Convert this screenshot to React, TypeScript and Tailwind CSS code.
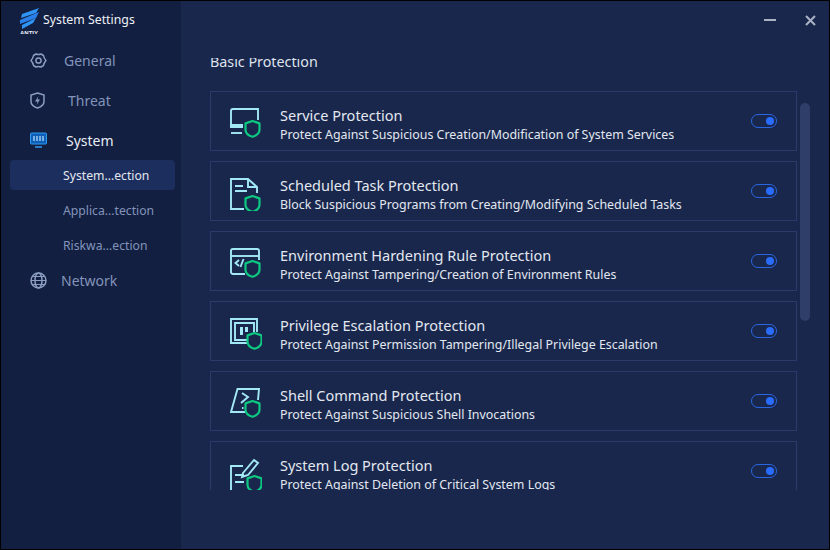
import React from "react";

const font = "font-['Noto_Sans','Open_Sans',sans-serif]";

function Shield({ x = 0, y = 0 }: { x?: number; y?: number }) {
  return (
    <g transform={`translate(${x} ${y})`}>
      <path
        d="M7.500 1 14.500 3.400V9.800c0 3.500-3 5.800-7 7-4-1.200-7-3.500-7-7V3.400Z"
        fill="#19274d"
        stroke="#0cc880"
        strokeWidth="2.200"
        strokeLinejoin="round"
      />
    </g>
  );
}

const line = { fill: "none", stroke: "#a3e8f5", strokeWidth: 1.9 };

const icons: Record<string, React.ReactNode> = {
  service: (
    <>
      <path d="M1 25V10a2 2 0 0 1 2-2h25v11" {...line} />
      <rect x="0" y="23" width="13" height="4" fill="#a3e8f5" />
      <path d="M1 32h11" {...line} />
      <Shield x={15} y={19} />
    </>
  ),
  task: (
    <>
      <path d="M14 38H1V8h17l9 8v6" {...line} />
      <path d="M18 8v8h9" {...line} />
      <path d="M5 15h8M5 20h12" {...line} />
      <Shield x={15} y={24} />
    </>
  ),
  env: (
    <>
      <path d="M15 33H3a2 2 0 0 1-2-2V10a2 2 0 0 1 2-2h24a2 2 0 0 1 2 2v9" {...line} />
      <path d="M1 15h28" {...line} />
      <path d="M9 19l-3.500 3 3.500 3M13.500 18l-3 8" {...line} />
      <Shield x={15} y={19} />
    </>
  ),
  privilege: (
    <>
      <path d="M17 32H1V8h26v13" {...line} />
      <path d="M17 29H5V12h19v9" {...line} />
      <rect x="10" y="16" width="3" height="8" fill="#a3e8f5" />
      <rect x="15" y="16" width="3" height="5" fill="#a3e8f5" />
      <Shield x={17} y={21} />
    </>
  ),
  shell: (
    <>
      <path d="M15 31H1L7.500 8H29l-1 11" {...line} />
      <path d="M12 12l6 4-7 6" {...line} />
      <path d="M12 27h1.500" {...line} />
      <Shield x={15} y={19} />
    </>
  ),
  log: (
    <>
      <path d="M13 15H1v25h14" {...line} />
      <path d="M5 24h9M5 31h9" {...line} />
      <path d="M13 22 24 9l4 3-10 12-6 2Z" {...line} />
      <Shield x={17} y={24} />
    </>
  ),
};

const cards = [
  { icon: "service", title: "Service Protection", desc: "Protect Against Suspicious Creation/Modification of System Services" },
  { icon: "task", title: "Scheduled Task Protection", desc: "Block Suspicious Programs from Creating/Modifying Scheduled Tasks" },
  { icon: "env", title: "Environment Hardening Rule Protection", desc: "Protect Against Tampering/Creation of Environment Rules" },
  { icon: "privilege", title: "Privilege Escalation Protection", desc: "Protect Against Permission Tampering/Illegal Privilege Escalation" },
  { icon: "shell", title: "Shell Command Protection", desc: "Protect Against Suspicious Shell Invocations" },
  { icon: "log", title: "System Log Protection", desc: "Protect Against Deletion of Critical System Logs" },
];

function Card({ icon, title, desc }: { icon: string; title: string; desc: string }) {
  return (
    <div className="flex h-[60px] items-center border border-[#2a3a6b] pl-[19px] pr-[19px]">
      <svg width="32" height="40" viewBox="0 0 32 40" className="shrink-0">
        {icons[icon]}
      </svg>
      <div className="ml-[18px] flex-1 pt-[7px]">
        <div className="text-[14.500px] leading-[19px] text-[#e3e7f0]">{title}</div>
        <div className="mt-[1px] text-[12.400px] leading-[18px] text-[#e3e7f0]">{desc}</div>
      </div>
      <div className="relative h-[14px] w-[26px] rounded-full border-[1.500px] border-[#2a66e0]">
        <div className="absolute right-[2.500px] top-[1.500px] h-[8px] w-[8px] rounded-full bg-[#2a6cff]" />
      </div>
    </div>
  );
}

function NavItem({ icon, label, active, pad }: { icon: React.ReactNode; label: string; active?: boolean; pad: string }) {
  return (
    <div className="flex h-[40px] items-center pl-[29px]">
      <svg width="17" height="17" viewBox="0 0 17 17" className="shrink-0">
        {icon}
      </svg>
      <span className={`${pad} text-[14px] ${active ? "text-[#e8ecf5]" : "text-[#8294bb]"}`}>{label}</span>
    </div>
  );
}

export default function App() {
  const grey = { fill: "none", stroke: "#8b9dc0", strokeWidth: 1.5 };
  return (
    <div className={`flex h-[550px] w-[830px] overflow-hidden border border-black bg-[#19274d] ${font}`}>
      <aside className="w-[180px] shrink-0 bg-[#121f40]">
        <div className="flex h-[39px] items-start pl-[18px] pt-[6px]">
          <svg width="22" height="27" viewBox="0 0 22 27" className="shrink-0">
            <path d="M3 7 20 1l-3 5L2 11Z" fill="#2f95f5" />
            <path d="M1 13 20 5l-3 6L1 17Z" fill="#2a7fe8" />
            <path d="M3 18 17 11l-3 5L3 22Z" fill="#2f95f5" />
            <text x="1" y="27.500" fontSize="6" fontWeight="800" fill="#f0f3f8" fontFamily="Liberation Sans" textLength="18">ANTIY</text>
          </svg>
          <span className="ml-[2px] pt-[1px] text-[12.300px] leading-[24px] text-[#eef1f7]">System Settings</span>
        </div>
        <NavItem
          pad="ml-[17px]"
          label="General"
          icon={
            <>
              <path d="M6 2Q8.500 3 11 2L13.500 3.500Q13.800 6 16 8.500 13.800 11 13.500 13.500L11 15Q8.500 14 6 15L3.500 13.500Q3.200 11 1 8.500 3.200 6 3.500 3.500Z" {...grey} strokeLinejoin="round" />
              <circle cx="8.500" cy="8.500" r="2.600" {...grey} />
            </>
          }
        />
        <NavItem
          pad="ml-[21px]"
          label="Threat"
          icon={
            <>
              <path d="M7.500 1 14 3v6.500c0 3-2.800 5.300-6.500 6.500C3.800 14.800 1 12.500 1 9.500V3Z" {...grey} />
              <path d="M8.500 4 5 9.500h2.500L6.500 13 10 7.500H7.500Z" fill="#8b9dc0" />
            </>
          }
        />
        <NavItem
          active
          pad="ml-[19px]"
          label="System"
          icon={
            <>
              <rect x="0.500" y="1" width="16" height="11" rx="1" fill="#0f5fb8" stroke="#2f9bf0" />
              <path d="M4 4v5M7 4v5M10 4v5M13 4v5" stroke="#bfe4ff" strokeWidth="1.200" />
              <path d="M5 15h7" stroke="#2f9bf0" strokeWidth="1.500" />
            </>
          }
        />
        <div className="flex flex-col gap-[5px]">
          <div className="ml-[9px] flex h-[30px] w-[165px] items-center rounded-[4px] bg-[#1c2e5e] pl-[53px] pt-[2px] text-[12.200px] text-[#e3e7f0]">
            System...ection
          </div>
          <div className="flex h-[30px] items-center pl-[62px] pt-[2px] text-[12.200px] text-[#8294bb]">Applica...tection</div>
          <div className="flex h-[30px] items-center pl-[62px] pt-[2px] text-[12.200px] text-[#8294bb]">Riskwa...ection</div>
        </div>
        <NavItem
          pad="ml-[14px]"
          label="Network"
          icon={
            <>
              <circle cx="8.500" cy="8.500" r="7.500" {...grey} />
              <ellipse cx="8.500" cy="8.500" rx="3.500" ry="7.500" {...grey} />
              <path d="M1 8.500h15M2.500 4.500h12M2.500 12.500h12" {...grey} strokeWidth="1.200" />
            </>
          }
        />
      </aside>
      <main className="relative flex-1">
        <div className="flex h-[57px] items-start justify-end">
          <svg width="60" height="30" viewBox="0 0 60 30" className="mr-[7px] mt-[8px]">
            <path d="M2 11h12" stroke="#aab2c4" strokeWidth="2" />
            <path d="M44 7l9 9M53 7l-9 9" stroke="#aab2c4" strokeWidth="2" />
          </svg>
        </div>
        <div className="h-[432px] overflow-hidden pl-[29px] pr-[32px]">
          <div className="-mt-[5px] h-[38px] text-[14.300px] leading-[18px] text-[#dfe3ec]">Basic Protection</div>
          <div className="flex flex-col gap-[10px]">
            {cards.map((c) => (
              <Card key={c.icon} {...c} />
            ))}
          </div>
        </div>
        <div className="absolute right-[19px] top-[102px] h-[218px] w-[10px] rounded-t-[5px] rounded-b-[5px] bg-[#2f3d69]" />
      </main>
    </div>
  );
}
